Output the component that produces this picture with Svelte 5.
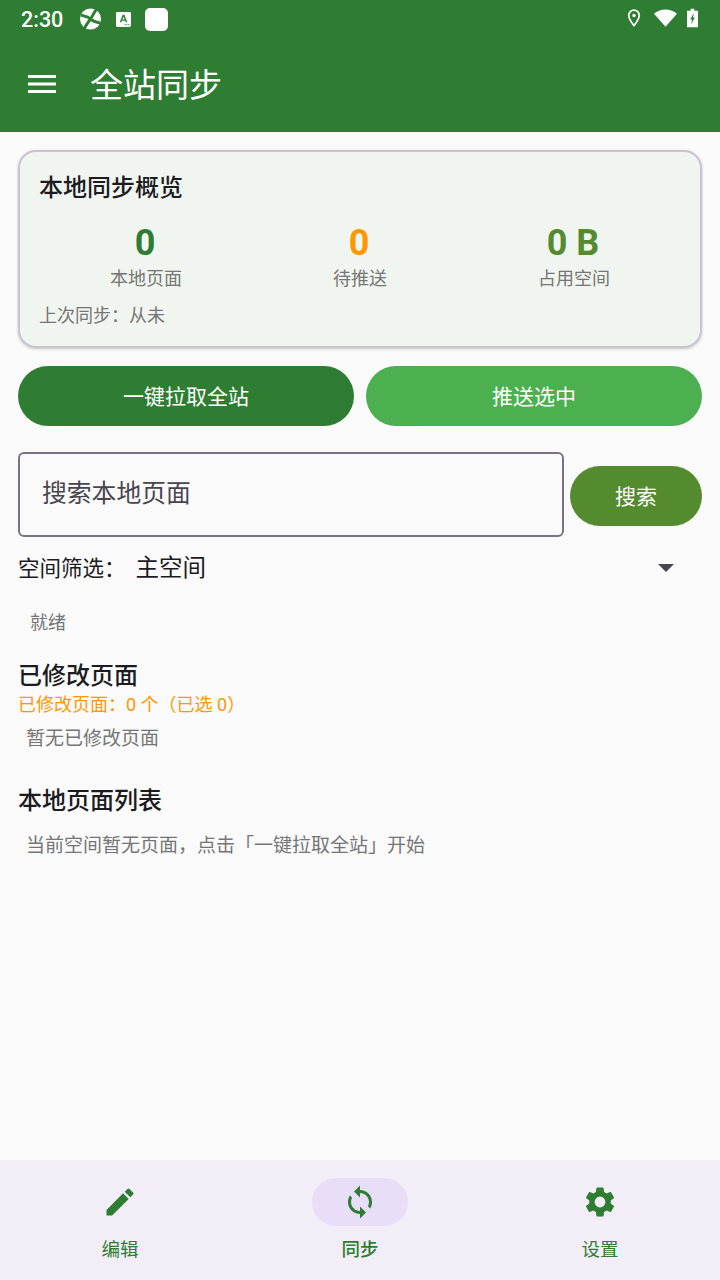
<script>
  const stats = [
    { value: '0', label: '本地页面', tone: 'green' },
    { value: '0', label: '待推送', tone: 'orange' },
    { value: '0 B', label: '占用空间', tone: 'lime' }
  ];
</script>

<div class="screen">
  <header class="top">
    <div class="status">
      <span class="time">2:30</span>
      <svg class="s1" viewBox="0 0 24 24"><circle cx="12" cy="12" r="12" fill="#fff"/><path d="M1 7.500C6 9 10 9.500 12 12S18 15.500 23 16.500M18.500 1.500C15.500 5 14 9.500 12 12S7.500 18.500 5 22.500" fill="none" stroke="#2e7d32" stroke-width="3.400"/></svg>
      <svg class="s2" viewBox="0 0 16 16"><rect width="16" height="16" rx="1.500" fill="#fff"/><path d="M4 11L7 3h2l3 8H10.300L9.700 9.300H6.300L5.700 11zM6.800 7.900h2.400L8 4.800z" fill="#2e7d32"/><path d="M9 13h1.200v1.200H9zM11 13h1.200v1.200H11zM13 13h1.200v1.200H13z" fill="#2e7d32"/></svg>
      <span class="s3"></span>
      <span class="grow"></span>
      <svg class="s4" viewBox="0 0 16 22"><path fill-rule="evenodd" d="M8 1a7 7 0 0 1 7 7c0 5-7 13-7 13S1 13 1 8a7 7 0 0 1 7-7zm0 2a5 5 0 0 0-5 5c0 3 3 7.500 5 10 2-2.500 5-7 5-10a5 5 0 0 0-5-5z M8 6a2 2 0 1 1 0 4 2 2 0 0 1 0-4z" fill="#fff"/></svg>
      <svg class="s5" viewBox="0 0 24 18"><path d="M12 18L0 4.500C3 1.700 7.300 0 12 0s9 1.700 12 4.500z" fill="#fff"/></svg>
      <svg class="s6" viewBox="0 0 12 20"><path fill-rule="evenodd" d="M4 0h4v2h4v18H0V2h4zM7.500 4.500L3.500 11.500H5.500L4.500 17 8.500 9.500H6.500z" fill="#fff"/></svg>
    </div>
    <div class="bar">
      <svg class="menu" viewBox="0 0 28 20"><path d="M0 1h28v3H0zM0 8.500h28v3H0zM0 16h28v3H0z" fill="#fff"/></svg>
      <h1>全站同步</h1>
    </div>
  </header>

  <main>
    <section class="card">
      <h2>本地同步概览</h2>
      <div class="stats">
        {#each stats as s}
          <div class="stat">
            <div class="value {s.tone}">{s.value}</div>
            <div class="label">{s.label}</div>
          </div>
        {/each}
      </div>
      <p class="last">上次同步：从未</p>
    </section>

    <div class="actions">
      <button class="act dark">一键拉取全站</button>
      <button class="act light">推送选中</button>
    </div>

    <div class="search">
      <div class="field">搜索本地页面</div>
      <button class="go">搜索</button>
    </div>

    <div class="filter">
      <span class="flabel">空间筛选：</span>
      <span class="fvalue">主空间</span>
      <span class="arrow"></span>
    </div>

    <p class="ready">就绪</p>

    <h3 class="h-mod">已修改页面</h3>
    <p class="count">已修改页面：0 个（已选 0）</p>
    <p class="empty">暂无已修改页面</p>

    <h3 class="h-list">本地页面列表</h3>
    <p class="empty two">当前空间暂无页面，点击「一键拉取全站」开始</p>
  </main>

  <nav>
    <div class="tab">
      <span class="pill">
        <svg viewBox="0 0 24 24"><path d="M3 17.250V21h3.750L17.810 9.940l-3.750-3.750L3 17.250zM20.710 7.040a1 1 0 0 0 0-1.410l-2.340-2.340a1 1 0 0 0-1.410 0l-1.830 1.830 3.750 3.750 1.830-1.830z"/></svg>
      </span>
      <span class="tlabel">编辑</span>
    </div>
    <div class="tab on">
      <span class="pill">
        <svg viewBox="0 0 24 24"><path d="M12 4V1L8 5l4 4V6c3.310 0 6 2.690 6 6 0 1.010-.25 1.970-.7 2.800l1.460 1.460C19.540 15.030 20 13.570 20 12c0-4.420-3.580-8-8-8zm0 14c-3.310 0-6-2.690-6-6 0-1.010.25-1.970.7-2.800L5.240 7.740C4.460 8.970 4 10.430 4 12c0 4.420 3.580 8 8 8v3l4-4-4-4v3z"/></svg>
      </span>
      <span class="tlabel">同步</span>
    </div>
    <div class="tab">
      <span class="pill">
        <svg viewBox="0 0 24 24"><path d="M19.140 12.940c.04-.3.060-.61.060-.94 0-.32-.02-.64-.07-.94l2.030-1.580a.49.490 0 0 0 .12-.61l-1.920-3.320a.49.490 0 0 0-.59-.22l-2.390.96c-.5-.38-1.030-.7-1.620-.94l-.36-2.540a.48.480 0 0 0-.48-.41h-3.840a.48.480 0 0 0-.47.410l-.36 2.540c-.59.240-1.130.57-1.620.94l-2.390-.96a.48.480 0 0 0-.59.220L2.740 8.870a.48.480 0 0 0 .12.610l2.030 1.580c-.05.300-.09.630-.09.940s.02.640.07.940l-2.030 1.580a.49.490 0 0 0-.12.610l1.920 3.320c.12.220.37.290.59.220l2.390-.96c.5.380 1.030.7 1.620.94l.36 2.540c.05.240.24.410.48.410h3.840c.24 0 .44-.17.470-.41l.36-2.540c.59-.24 1.130-.56 1.620-.94l2.390.96c.22.080.47 0 .59-.22l1.920-3.320a.47.470 0 0 0-.12-.61l-2.010-1.580zM12 15.600A3.610 3.610 0 0 1 8.400 12 3.610 3.610 0 0 1 12 8.400a3.610 3.610 0 0 1 3.600 3.600 3.610 3.610 0 0 1-3.600 3.600z"/></svg>
      </span>
      <span class="tlabel">设置</span>
    </div>
  </nav>
</div>

<style>
  :global(body) { margin: 0; }
  .screen {
    width: 720px; height: 1280px; display: flex; flex-direction: column;
    background: #fafafa; overflow: hidden;
    font-family: Roboto, "Noto Sans CJK SC", sans-serif;
  }
  .top { background: #2e7d32; height: 132px; flex: none; }
  .status { height: 38px; display: flex; align-items: center; padding: 0 22px 0 21px; }
  .time { color: #fff; font-size: 21.500px; font-weight: 500; width: 59px; }
  .s1 { width: 21px; height: 22px; }
  .s2 { width: 15px; height: 15px; margin-left: 15px; }
  .s3 { width: 23px; height: 23px; background: #fff; border-radius: 5px; margin-left: 14px; }
  .grow { flex: 1; }
  .s4 { width: 14px; height: 20px; margin-top: -2px; }
  .s5 { width: 23px; height: 18px; margin-left: 13px; margin-top: -2px; }
  .s6 { width: 11px; height: 20px; margin-left: 10px; margin-top: -2px; }
  .bar { height: 94px; box-sizing: border-box; padding: 0 0 2px 28px; display: flex; align-items: center; }
  .menu { width: 28px; height: 20px; }
  h1 { margin: 0 0 3px 34px; color: #fff; font-size: 33px; font-weight: 400; }

  main { flex: 1; padding: 18px 18px 0; display: flex; flex-direction: column; min-height: 0; }
  .card {
    height: 198px; box-sizing: border-box;
    border: 2px solid #cac4d0; border-radius: 18px; background: #f1f5f0;
    padding: 20px 19px 0; box-shadow: 0 1px 3px rgba(0,0,0,.2);
  }
  h2 { margin: 0; font-size: 24px; line-height: 32px; font-weight: 500; color: #1c1b1f; }
  .stats { display: flex; margin-top: 16px; justify-content: space-around; }
  .stat { text-align: center; width: 200px; }
  .value { font-size: 36px; line-height: 46px; font-weight: 700; padding-right: 2px; }
  .green { color: #2e7d32; } .orange { color: #ff9800; } .lime { color: #558b2f; }
  .label { font-size: 18px; line-height: 26px; color: #757575; }
  .last { margin: 11px 0 0; font-size: 18px; line-height: 26px; color: #757575; }

  .actions { display: flex; gap: 12px; margin-top: 18px; }
  .act { flex: 1; height: 60px; border: 0; border-radius: 30px; color: #fff; font: inherit; font-size: 21px; padding: 0 0 2px; }
  .dark { background: #2e7d32; } .light { background: #4caf50; }

  .search { display: flex; align-items: center; gap: 6px; margin-top: 26px; }
  .field {
    flex: 1; height: 85px; box-sizing: border-box; border: 2px solid #79747e; border-radius: 6px;
    padding: 0 0 8px 22px; display: flex; align-items: center; font-size: 24.800px; color: #49454f;
  }
  .go { width: 132px; height: 60px; margin-top: 2px; border: 0; border-radius: 30px; background: #558b2f; color: #fff; font: inherit; font-size: 21px; padding: 0 0 2px; }

  .filter { display: flex; align-items: center; height: 62px; box-sizing: border-box; padding-bottom: 4px; color: #1c1b1f; }
  .flabel { font-size: 21.500px; width: 117.500px; }
  .fvalue { font-size: 23.500px; flex: 1; }
  .arrow { width: 0; height: 0; border: 8px solid transparent; border-top-color: #49454f; border-bottom: 0; margin: 4px 28px 0 0; }

  p { margin: 0; }
  .ready { font-size: 18px; line-height: 26px; color: #757575; margin: 11px 0 0 12px; }
  h3 { margin: 0; font-size: 24px; line-height: 32px; font-weight: 500; color: #1c1b1f; }
  .h-mod { margin-top: 24px; }
  .count { font-size: 18px; line-height: 24px; color: #ff9800; margin-top: 1px; }
  .empty { font-size: 19px; line-height: 28px; color: #757575; margin: 8px 0 0 8px; }
  .h-list { margin-top: 32px; }
  .two { margin-top: 15px; }

  nav { height: 120px; flex: none; background: #f3edf7; display: flex; }
  .tab { flex: 1; display: flex; flex-direction: column; align-items: center; padding-top: 18px; color: #2e7d32; }
  .pill { width: 96px; height: 48px; border-radius: 24px; display: flex; align-items: center; justify-content: center; }
  .on .pill { background: #e8def8; }
  .pill svg { width: 36px; height: 36px; fill: #2e7d32; }
  .tlabel { font-size: 18.500px; line-height: 26px; margin-top: 11px; }
  .on .tlabel { font-weight: 500; }
</style>
